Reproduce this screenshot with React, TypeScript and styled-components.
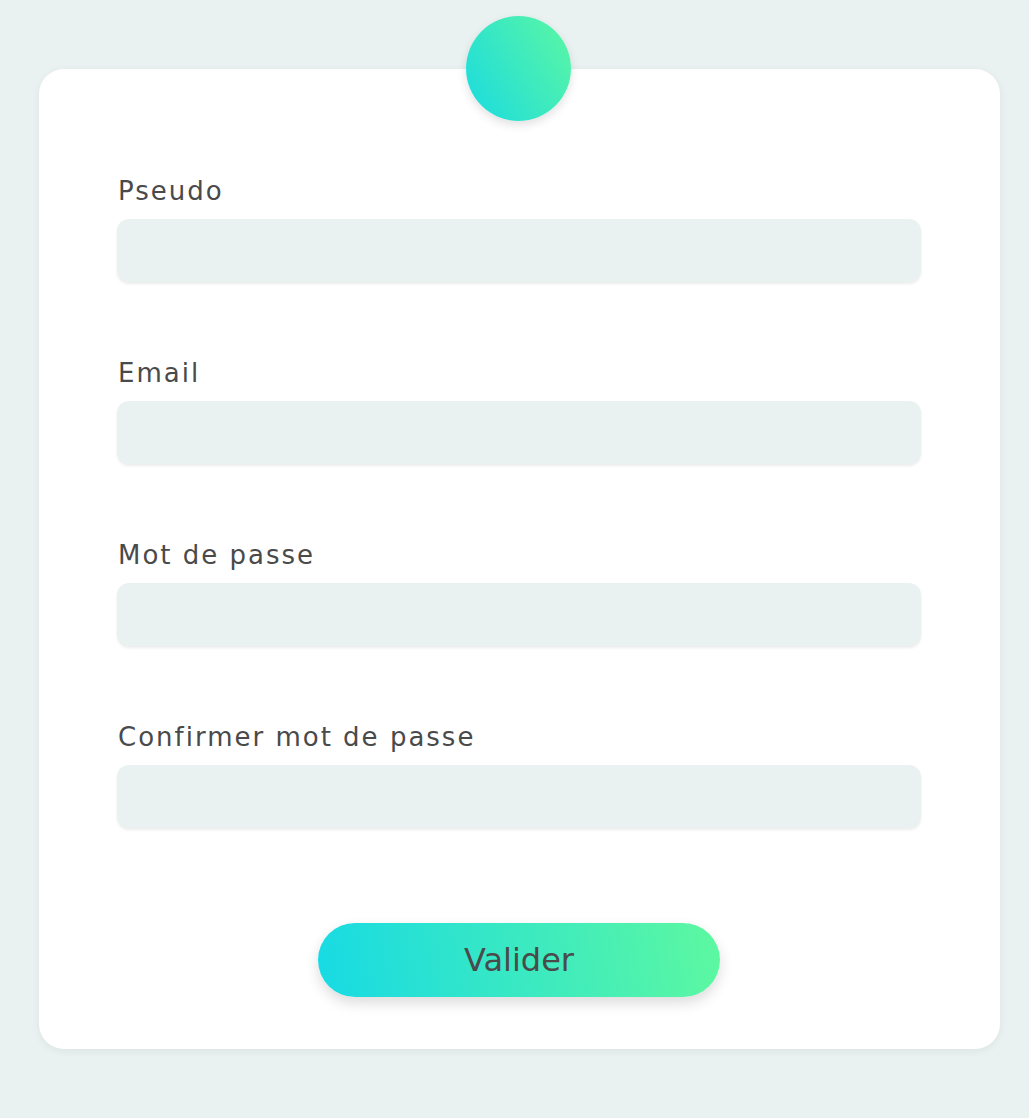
import React from "react";
import styled, { createGlobalStyle } from "styled-components";

const GlobalStyle = createGlobalStyle`
  body {
    margin: 0;
    background: #eaf2f1;
    font-family: "DejaVu Sans", "Liberation Sans", sans-serif;
  }
`;

const fields = ["Pseudo", "Email", "Mot de passe", "Confirmer mot de passe"];

const App = () => {
  return (
    <>
      <GlobalStyle />
      <Page>
        <Card>
          <Avatar />
          <Form>
            {fields.map((f) => (
              <Field key={f}>
                <Label>{f}</Label>
                <Input type={f.includes("passe") ? "password" : "text"} />
              </Field>
            ))}
            <ButtonRow>
              <Submit type="button">Valider</Submit>
            </ButtonRow>
          </Form>
        </Card>
      </Page>
    </>
  );
};

const Page = styled.div`
  padding: 69px 29px 69px 39px;
`;

const Card = styled.div`
  position: relative;
  width: 961px;
  height: 980px;
  box-sizing: border-box;
  background: #fff;
  border-radius: 25px;
  box-shadow: 0 2px 8px rgba(0, 0, 0, 0.06);
  padding: 107px 79px 0 78px;
`;

const Avatar = styled.div`
  position: absolute;
  top: -53px;
  left: 50%;
  width: 105px;
  height: 105px;
  margin-left: -54px;
  border-radius: 50%;
  background: linear-gradient(60deg, #1adbe0 0%, #5cf7a2 100%);
  box-shadow: 0 4px 10px rgba(0, 0, 0, 0.12);
`;

const Form = styled.form`
  display: flex;
  flex-direction: column;
  gap: 76px;
`;

const Field = styled.div`
  display: flex;
  flex-direction: column;
  gap: 13px;
`;

const Label = styled.label`
  font-size: 26px;
  letter-spacing: 2px;
  color: #4a4a4a;
  line-height: 30px;
  padding-left: 1px;
`;

const Input = styled.input`
  height: 63px;
  box-sizing: border-box;
  border: none;
  outline: none;
  border-radius: 12px;
  background: #eaf2f1;
  box-shadow: 0 2px 3px rgba(0, 0, 0, 0.08);
  padding: 0 20px;
  font-size: 20px;
  font-family: inherit;
`;

const ButtonRow = styled.div`
  display: flex;
  justify-content: center;
  margin-top: 19px;
`;

const Submit = styled.button`
  width: 402px;
  height: 74px;
  border: none;
  border-radius: 37px;
  background: linear-gradient(80deg, #17dae4 0%, #5df8a0 100%);
  box-shadow: 0 6px 14px rgba(0, 0, 0, 0.14);
  color: #4a4a4a;
  font-family: inherit;
  font-size: 32px;
  padding: 0;
  cursor: pointer;
`;

export default App;
